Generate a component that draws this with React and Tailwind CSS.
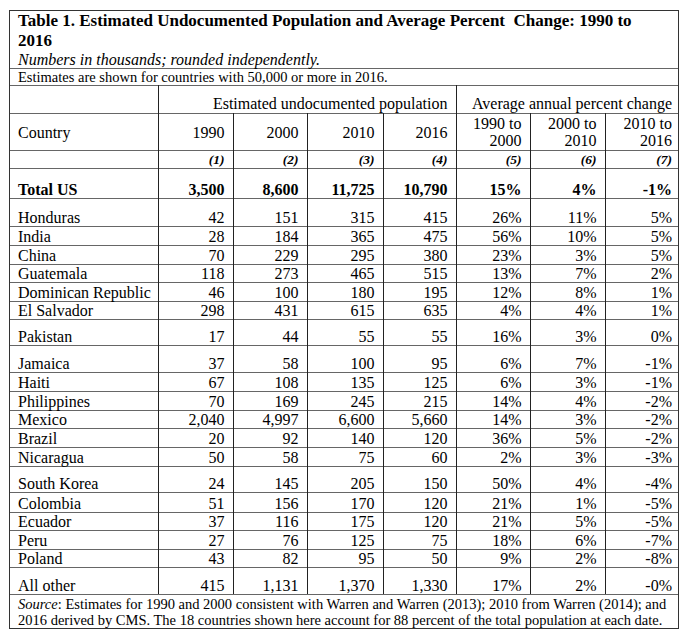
import React from 'react';

const rows = [
  ['Honduras', '42', '151', '315', '415', '26%', '11%', '5%', 'h-[28px]'],
  ['India', '28', '184', '365', '475', '56%', '10%', '5%', 'h-[19px]'],
  ['China', '70', '229', '295', '380', '23%', '3%', '5%', 'h-[19px]'],
  ['Guatemala', '118', '273', '465', '515', '13%', '7%', '2%', 'h-[18px]'],
  ['Dominican Republic', '46', '100', '180', '195', '12%', '8%', '1%', 'h-[19px]'],
  ['El Salvador', '298', '431', '615', '635', '4%', '4%', '1%', 'h-[18px]'],
  ['Pakistan', '17', '44', '55', '55', '16%', '3%', '0%', 'h-[26px]'],
  ['Jamaica', '37', '58', '100', '95', '6%', '7%', '-1%', 'h-[27px]'],
  ['Haiti', '67', '108', '135', '125', '6%', '3%', '-1%', 'h-[19px]'],
  ['Philippines', '70', '169', '245', '215', '14%', '4%', '-2%', 'h-[19px]'],
  ['Mexico', '2,040', '4,997', '6,600', '5,660', '14%', '3%', '-2%', 'h-[18px]'],
  ['Brazil', '20', '92', '140', '120', '36%', '5%', '-2%', 'h-[19px]'],
  ['Nicaragua', '50', '58', '75', '60', '2%', '3%', '-3%', 'h-[19px]'],
  ['South Korea', '24', '145', '205', '150', '50%', '4%', '-4%', 'h-[26px]'],
  ['Colombia', '51', '156', '170', '120', '21%', '1%', '-5%', 'h-[20px]'],
  ['Ecuador', '37', '116', '175', '120', '21%', '5%', '-5%', 'h-[18px]'],
  ['Peru', '27', '76', '125', '75', '18%', '6%', '-7%', 'h-[19px]'],
  ['Poland', '43', '82', '95', '50', '9%', '2%', '-8%', 'h-[18px]'],
  ['All other', '415', '1,131', '1,370', '1,330', '17%', '2%', '-0%', 'h-[26px]'],
];

const widths = ['w-[148px]', 'w-[75px]', 'w-[74px]', 'w-[76px]', 'w-[73px]', 'w-[74px]', 'w-[75px]', 'w-[73px]'];

// horizontal rules are lighter than the column rules
const cell = 'border-t border-t-[#666] border-r border-r-[#222] last:border-r-0 p-0 align-bottom';

const App = () => {
  return (
    <div className="w-[690px] h-[635px] bg-white pt-[10px] pl-[9px] text-black font-[family-name:'Liberation_Serif','Times_New_Roman',serif]">
      <div className="w-[670px] border border-[#333]">
        {/* Title */}
        <div className="h-[57px] pl-[8px]">
          <h1 className="text-[17px] font-bold leading-[20px]">
            Table 1. Estimated Undocumented Population and Average Percent&nbsp; Change: 1990 to
            <br />
            2016
          </h1>
          <p className="text-[16px] italic leading-[17px]">Numbers in thousands; rounded independently.</p>
        </div>

        <div className="h-[17px] border-t border-[#666] pl-[8px] text-[14.5px] leading-[16px]">
          Estimates are shown for countries with 50,000 or more in 2016.
        </div>

        <table className="w-full table-fixed border-collapse text-[16px] leading-[17px]">
          <colgroup>
            {widths.map((w, i) => (
              <col key={i} className={w} />
            ))}
          </colgroup>
          <thead>
            <tr className="h-[28px]">
              <td className={cell}></td>
              <td colSpan={4} className={`${cell} text-right pr-2 pb-[1px]`}>Estimated undocumented population</td>
              <td colSpan={3} className={`${cell} text-right pr-[6px] pb-[1px]`}>Average annual percent change</td>
            </tr>
            <tr className="h-[37px]">
              <td className={`${cell} align-middle pl-2`}>Country</td>
              <td className={`${cell} align-middle text-right pr-2`}>1990</td>
              <td className={`${cell} align-middle text-right pr-2`}>2000</td>
              <td className={`${cell} align-middle text-right pr-2`}>2010</td>
              <td className={`${cell} align-middle text-right pr-2`}>2016</td>
              <td className={`${cell} align-middle text-right pr-2`}>1990 to<br />2000</td>
              <td className={`${cell} align-middle text-right pr-2`}>2000 to<br />2010</td>
              <td className={`${cell} align-middle text-right pr-[6px]`}>2010 to<br />2016</td>
            </tr>
            <tr className="h-[18px]">
              <td className={cell}></td>
              {['(1)', '(2)', '(3)', '(4)', '(5)', '(6)', '(7)'].map((n, i) => (
                <td
                  key={n}
                  className={`${cell} align-middle text-right text-[13.5px] leading-[15px] font-bold italic ${i === 6 ? 'pr-[6px]' : 'pr-2'}`}
                >
                  {n}
                </td>
              ))}
            </tr>
          </thead>
          <tbody>
            <tr className="h-[30px] font-bold">
              <td className={`${cell} pl-2`}>Total US</td>
              {['3,500', '8,600', '11,725', '10,790', '15%', '4%', '-1%'].map((v, i) => (
                <td key={i} className={`${cell} text-right ${i === 6 ? 'pr-[6px]' : 'pr-2'}`}>
                  {v}
                </td>
              ))}
            </tr>
            {rows.map((r) => (
              <tr key={r[0]} className={r[8]}>
                <td className={`${cell} pl-2 whitespace-nowrap`}>{r[0]}</td>
                {r.slice(1, 8).map((v, i) => (
                  <td key={i} className={`${cell} text-right ${i === 6 ? 'pr-[6px]' : 'pr-2'}`}>
                    {v}
                  </td>
                ))}
              </tr>
            ))}
          </tbody>
        </table>

        {/* Footnote */}
        <div className="h-[34px] border-t border-[#666] pl-[8px] pt-[1px] text-[14.5px] leading-[16px] whitespace-nowrap">
          <i>Source</i>: Estimates for 1990 and 2000 consistent with Warren and Warren (2013); 2010 from Warren (2014); and
          <br />
          2016 derived by CMS. The 18 countries shown here account for 88 percent of the total population at each date.
        </div>
      </div>
    </div>
  );
};

export default App;
